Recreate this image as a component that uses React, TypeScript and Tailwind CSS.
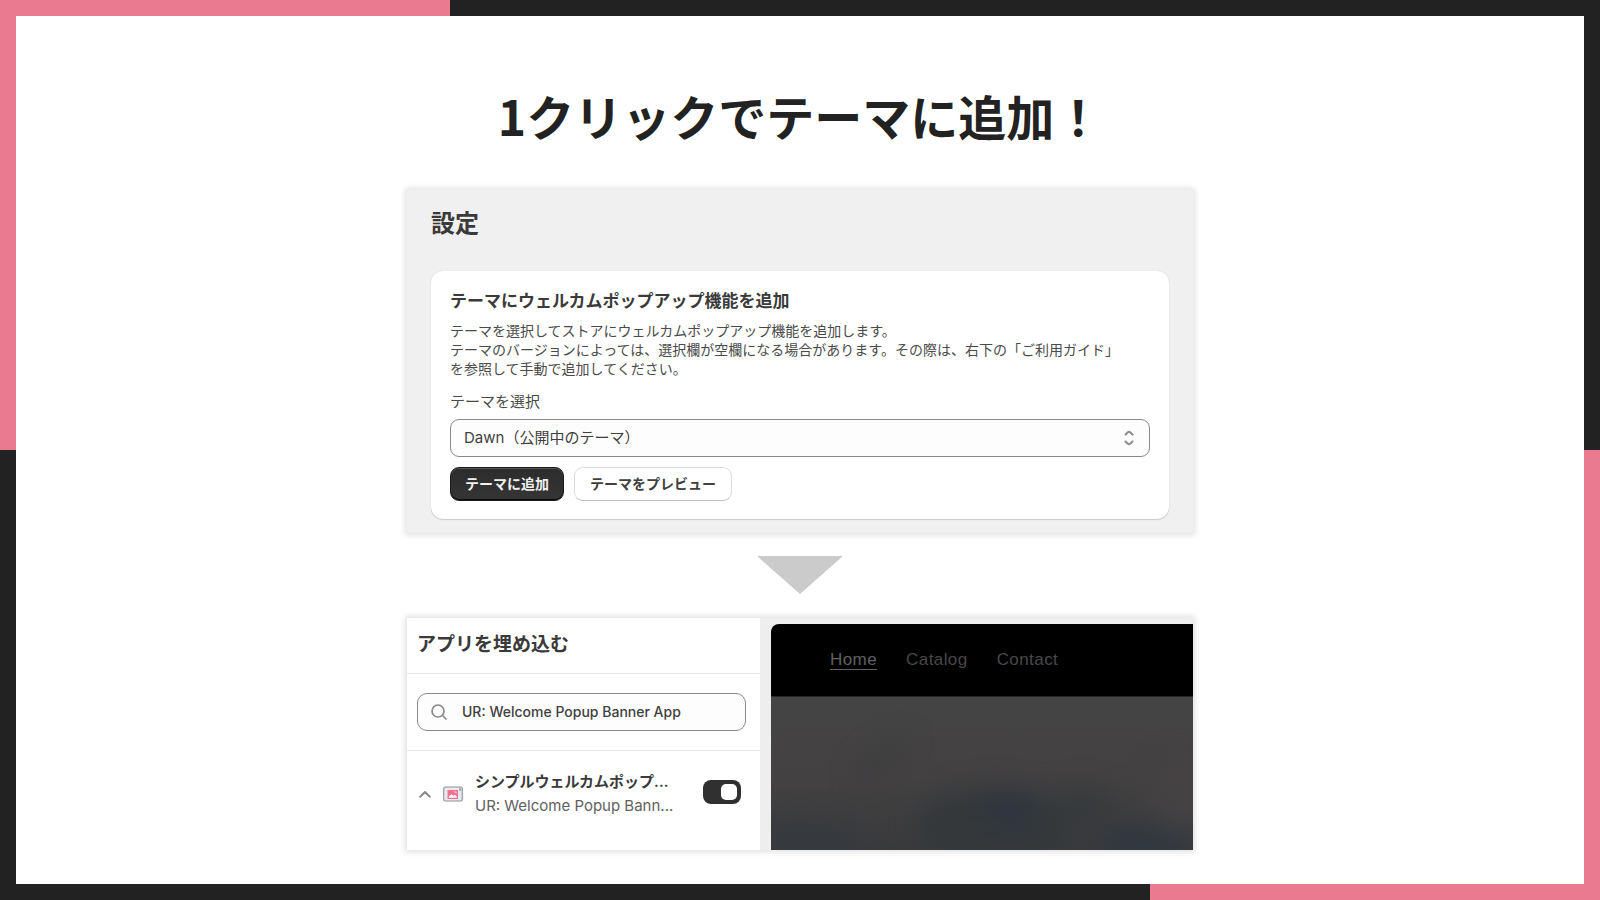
import React, { useState } from 'react';

const PANEL_SHADOW = 'shadow-[0_0_6px_2px_rgba(0,0,0,0.12)]';

export default function App() {
  return (
    <div className="min-h-screen flex p-4 bg-[#222222] bg-[linear-gradient(#e97a90,#e97a90),linear-gradient(#e97a90,#e97a90)] bg-no-repeat bg-size-[450px_450px] bg-[position:0_0,100%_100%] font-['Inter','Noto_Sans_CJK_JP',sans-serif]">
      <main className="flex-1 flex flex-col items-center bg-white px-6 pt-16 pb-8" lang="ja">
        <h1 className="font-['Noto_Sans_CJK_JP',sans-serif] text-5xl leading-[70px] font-bold text-[#222222] text-center">
          1クリックでテーマに追加！
        </h1>
        <SettingsPanel />
        <svg className="mt-[23px] w-[86px] h-[38px]" viewBox="0 0 86 38" aria-hidden="true">
          <path d="M0 0H86L43 38Z" fill="#cbcbcb" />
        </svg>
        <EditorPanel />
      </main>
    </div>
  );
}

function SettingsPanel() {
  return (
    <section className={`mt-10 w-full max-w-[786px] bg-[#f0f0f0] px-6 pt-4 pb-[14px] ${PANEL_SHADOW}`}>
      <h2 className="text-2xl leading-9 font-semibold text-[#3a3a3a]">設定</h2>
      <div className="mt-[29px] rounded-xl bg-white px-[19px] pt-[18px] pb-[18px] shadow-[0_1px_1px_rgba(0,0,0,0.14),0_0_1px_rgba(0,0,0,0.16)]">
        <h3 className="text-[17px] leading-6 font-semibold text-[#3a3a3a]">
          テーマにウェルカムポップアップ機能を追加
        </h3>
        <p className="mt-2 text-sm leading-[19px] text-[#4a4a4a]">
          テーマを選択してストアにウェルカムポップアップ機能を追加します。
          <br />
          テーマのバージョンによっては、選択欄が空欄になる場合があります。その際は、右下の「ご利用ガイド」
          <br />
          を参照して手動で追加してください。
        </p>
        <label htmlFor="theme" className="mt-3 block text-[15px] leading-6 text-[#4a4a4a]">
          テーマを選択
        </label>
        <div className="relative mt-[5px]">
          <select
            id="theme"
            className="block h-[38px] w-full appearance-none rounded-[9px] border border-[#8a8a8a] bg-[#fdfdfd] px-[13px] text-[15px] text-[#404040]">
            <option>Dawn（公開中のテーマ）</option>
          </select>
          <svg
            className="pointer-events-none absolute right-4 top-[11px] h-4 w-[10px]"
            viewBox="0 0 10 16"
            fill="none"
            stroke="#8a8a8a"
            strokeWidth="2"
            strokeLinecap="round"
            strokeLinejoin="round">
            <path d="M1.5 4.5 3.9 2.2Q5 1.2 6.1 2.2L8.5 4.5M1.5 11.5 3.9 13.8Q5 14.8 6.1 13.8L8.5 11.5" />
          </svg>
        </div>
        <div className="mt-[10px] flex gap-[10px]">
          <button
            type="button"
            className="h-[34px] rounded-[9px] border border-[#1a1a1a] bg-linear-to-b from-[#2c2c2c] to-[#353535] px-[14px] text-sm font-semibold text-[#f0f0f0] shadow-[inset_0_-1px_0_rgba(0,0,0,0.8),inset_0_1px_0_rgba(255,255,255,0.2)]">
            テーマに追加
          </button>
          <button
            type="button"
            className="h-[34px] rounded-[9px] border border-[#dedede] border-b-[#bdbdbd] bg-white px-[15px] text-sm font-semibold text-[#404040]">
            テーマをプレビュー
          </button>
        </div>
      </div>
    </section>
  );
}

function EditorPanel() {
  return (
    <section className={`mt-6 flex w-full max-w-[786px] bg-[#eeeeee] ${PANEL_SHADOW}`}>
      <div className="flex w-[353px] shrink-0 flex-col bg-white">
        <h2 className="border-b border-[#e8e8e8] px-[10px] pt-[13px] pb-[14px] text-[19px] leading-7 font-semibold text-[#3a3a3a]">
          アプリを埋め込む
        </h2>
        <div className="border-b border-[#e8e8e8] py-[19px] pr-[14px] pl-[10px]">
          <div className="flex h-[38px] items-center rounded-[10px] border border-[#8a8a8a] bg-[#fdfdfd] pl-3">
            <SearchIcon />
            <input
              type="text"
              aria-label="アプリを検索"
              defaultValue="UR: Welcome Popup Banner App"
              className="ml-[14px] min-w-0 flex-1 bg-transparent text-sm font-medium text-[#404040] outline-none"
            />
          </div>
        </div>
        <AppRow />
      </div>
      <Storefront />
    </section>
  );
}

function AppRow() {
  const [enabled, setEnabled] = useState(true);
  return (
    <div className="flex items-center pt-[19px] pb-[31px] pl-3 pr-[19px]">
      <button type="button" aria-label="詳細を閉じる">
        <svg className="block h-2 w-3" viewBox="0 0 12 8" fill="none" stroke="#8a8a8a" strokeWidth="2" strokeLinecap="round" strokeLinejoin="round">
          <path d="M1.2 6.8 6 2 10.8 6.8" />
        </svg>
      </button>
      <AppIcon />
      <div className="ml-3">
        <p className="text-[15px] leading-6 font-semibold text-[#3a3a3a]">シンプルウェルカムポップ...</p>
        <p className="text-[15px] leading-6 text-[#616161]">UR: Welcome Popup Bann...</p>
      </div>
      <label className="mb-1 ml-auto flex h-6 w-[38px] items-center justify-end rounded-lg bg-[#303030] px-1">
        <input
          type="checkbox"
          role="switch"
          aria-label="シンプルウェルカムポップ"
          checked={enabled}
          onChange={(e) => setEnabled(e.target.checked)}
          className="size-4 appearance-none rounded-[5px] bg-white not-checked:mr-auto"
        />
      </label>
    </div>
  );
}

function SearchIcon() {
  return (
    <svg className="size-[18px] shrink-0" viewBox="0 0 18 18" fill="none" stroke="#8a8a8a" strokeWidth="1.7" strokeLinecap="round">
      <circle cx="8" cy="8" r="6" />
      <path d="M12.5 12.5 16 16" />
    </svg>
  );
}

function AppIcon() {
  return (
    <svg className="ml-3 h-4 w-5 shrink-0" viewBox="0 0 20 16" aria-hidden="true">
      <rect x="0.75" y="1" width="18.5" height="14" rx="1.5" fill="#e6ebee" stroke="#8f8f93" strokeWidth="1.1" />
      <rect x="4.5" y="4" width="10.5" height="9" fill="#f56f8e" />
      <path d="M5.8 11.8V10.4L8.6 8.2 10.4 9.8 11.8 8.8 13.8 10.6V11.8Z" fill="#fff" />
      <path d="M10 5.4H13.6V7.6L12 6.6Z" fill="#fbd3dc" />
      <path d="M16.2 2.6 18 4.4M18 2.6 16.2 4.4" stroke="#77777b" strokeWidth="0.9" />
    </svg>
  );
}

function Storefront() {
  return (
    <div className="mt-[6px] ml-[11px] flex min-w-0 flex-1 flex-col overflow-hidden rounded-tl-lg bg-black">
      <nav className="flex h-[73px] items-center gap-[29px] border-b border-[#262626] pl-[59px] font-['Liberation_Sans',sans-serif] text-[17px] leading-[19px] tracking-wide text-[#484848]">
        <a href="#home" className="border-b border-[#606060] text-[#606060]">Home</a>
        <a href="#catalog" className="border-b border-transparent">Catalog</a>
        <a href="#contact" className="border-b border-transparent">Contact</a>
      </nav>
      <svg className="min-h-[153px] w-full flex-1" viewBox="0 0 422 153" preserveAspectRatio="none" aria-hidden="true">
        <defs>
          <linearGradient id="sky" x1="0" y1="0" x2="0" y2="1">
            <stop offset="0" stopColor="#454444" />
            <stop offset="0.55" stopColor="#434142" />
            <stop offset="1" stopColor="#393a3c" />
          </linearGradient>
          <filter id="soft" x="-60%" y="-60%" width="220%" height="220%" colorInterpolationFilters="sRGB">
            <feGaussianBlur stdDeviation="13" />
          </filter>
        </defs>
        <rect width="422" height="153" fill="url(#sky)" />
        <g filter="url(#soft)">
          <ellipse cx="30" cy="148" rx="60" ry="24" fill="#363a3e" />
          <ellipse cx="110" cy="62" rx="32" ry="8" fill="#3d3d3f" transform="rotate(-38 110 62)" />
          <ellipse cx="225" cy="128" rx="80" ry="38" fill="#34383b" />
          <ellipse cx="238" cy="113" rx="22" ry="14" fill="#2c3441" />
          <ellipse cx="310" cy="112" rx="34" ry="22" fill="#373a3c" />
          <ellipse cx="372" cy="150" rx="44" ry="20" fill="#303840" />
          <ellipse cx="410" cy="95" rx="30" ry="36" fill="#454244" />
        </g>
      </svg>
    </div>
  );
}
